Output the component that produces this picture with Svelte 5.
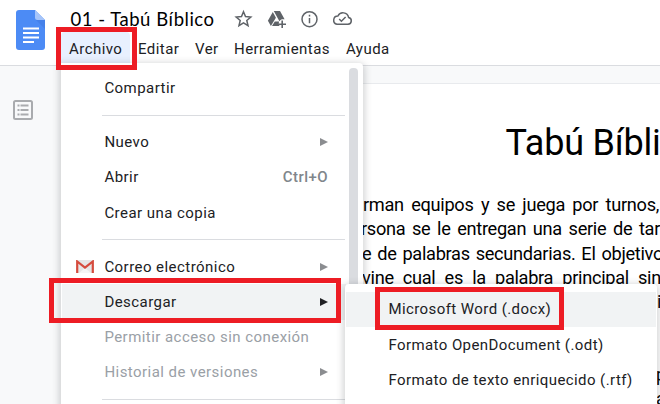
<script>
  const menus = [
    { label: 'Archivo', w: 54 },
    { label: 'Editar', w: 42 },
    { label: 'Ver', w: 24 },
    { label: 'Herramientas', w: 97 },
    { label: 'Ayuda', w: 45 }
  ];
  const items = [
    { label: 'Compartir' },
    { sep: true },
    { label: 'Nuevo', sub: true },
    { label: 'Abrir', key: 'Ctrl+O' },
    { label: 'Crear una copia' },
    { sep: true },
    { label: 'Correo electrónico', sub: true, gmail: true },
    { label: 'Descargar', sub: true, active: true },
    { label: 'Permitir acceso sin conexión', off: true },
    { label: 'Historial de versiones', sub: true, off: true },
    { sep: true }
  ];
  const formats = ['Microsoft Word (.docx)', 'Formato OpenDocument (.odt)', 'Formato de texto enriquecido (.rtf)'];
  const lines = [
    { t: 'rman equipos y se juega por turnos,', x: 363, w: 296 },
    { t: 'rsona se le entregan una serie de tar', x: 361, w: 299 },
    { t: 'e de palabras secundarias. El objetivo', x: 362, w: 301 },
    { t: 'vine cual es la palabra principal sin', x: 362, w: 299 },
    { t: 'i', x: 657, w: 6 },
    { t: '', x: 658, w: 6 },
    { t: '', x: 658, w: 6 },
    { t: 'p', x: 656, w: 12 },
    { t: 'a', x: 656, w: 12 }
  ];
</script>

<div class="app">
  <header>
    <svg class="logo" width="29" height="40" viewBox="0 0 29 40">
      <path d="M3 0H19L29 10V37a3 3 0 0 1-3 3H3a3 3 0 0 1-3-3V3a3 3 0 0 1 3-3z" fill="#4c8bf5" />
      <path d="M19 0L29 10H21.500a2.500 2.500 0 0 1-2.500-2.500z" fill="#a6c5fa" />
      <path d="M20 10H29V19z" fill="#3f7ae0" opacity=".55" />
      <path d="M7 17.500h16v2H7zM7 22h16v2H7zM7 26.500h16v2H7zM7 31h11v2H7z" fill="#fff" />
    </svg>
    <div class="heading">
      <div class="titlebar">
        <span class="title">01 - Tabú Bíblico</span>
        <svg class="tools" width="124" height="20" viewBox="0 0 124 20" fill="none" stroke="#5f6368" stroke-width="1.500">
          <path d="M9.500 2.700l2 4.900 5.300.4-4 3.500 1.200 5.100-4.500-2.700L5 16.600l1.200-5.100-4-3.500 5.300-.4z" />
          <g fill="#5f6368" stroke="none">
            <path d="M39.800 2h6.200l4.600 8.200h-2.700a5 5 0 0 0-2.500 2z" />
            <path d="M38.800 3l3.100 5.700-5 8.400-3-5.400z" />
            <path d="M40.800 12.400h4.200a6 6 0 0 0 .5 4.700H38z" />
            <path d="M47.400 11.500h1.600v3h3v1.600h-3v3h-1.600v-3h-3v-1.600h3z" />
          </g>
          <circle cx="75.500" cy="10.200" r="7.500" />
          <path d="M75.500 9v5.200M75.500 5.800v1.700" />
          <path d="M103 15.300h11a3.500 3.500 0 0 0 .6-6.900a5.700 5.700 0 0 0-10.700-1.400a4.200 4.200 0 0 0-.9 8.300z" />
          <path d="M105.200 10l2.200 2.200 4.200-4.200" />
        </svg>
      </div>
      <nav>
        {#each menus as m}
          <span class="menu" class:open={m.label === 'Archivo'}><span class="fit" style="width:{m.w}px">{m.label}</span></span>
        {/each}
      </nav>
    </div>
  </header>

  <main>
    <aside>
      <svg width="20" height="20" viewBox="0 0 20 20" fill="none" stroke="#a9abae">
        <rect x="1" y="1" width="18" height="18" rx="1.500" stroke-width="2" />
        <path d="M7.500 5.500h8M7.500 10h8M7.500 14.500h8M4.500 5.500h2M4.500 10h2M4.500 14.500h2" stroke-width="1.800" />
      </svg>
    </aside>
    <article>
      <h1>Tabú Bíblico</h1>
      {#each lines as l}
        <p style="margin-left:{l.x - 61}px;width:{l.w}px">{l.t}</p>
      {/each}
    </article>
  </main>

  <div class="dropdown">
    {#each items as it}
      {#if it.sep}
        <div class="sep"></div>
      {:else}
        <div class="row" class:active={it.active} class:off={it.off}>
          {#if it.gmail}
            <svg class="gmail" width="18" height="13" viewBox="0 0 18 13">
              <path d="M1 0h16v13H1z" fill="#e6e6e6" />
              <path d="M3 13l6-5 6 5z" fill="#f5f5f5" />
              <path d="M1.200 13V1.500L9 7.500l7.800-6V13" fill="none" stroke="#d54b3d" stroke-width="2.200" />
            </svg>
          {/if}
          <span>{it.label}</span>
          {#if it.key}<span class="key">{it.key}</span>{/if}
          {#if it.sub}<svg class="arrow" width="8" height="8" viewBox="0 0 8 8"><path d="M0 0L8 4L0 8z" fill="currentColor" /></svg>{/if}
        </div>
      {/if}
    {/each}
    <div class="scroll"></div>
  </div>

  <div class="submenu">
    {#each formats as f, i}
      <div class="row" class:active={i === 0}><span>{f}</span></div>
    {/each}
  </div>

  <div class="mark file"></div>
  <div class="mark download"></div>
  <div class="mark word"></div>
</div>

<style>
  :global(body) { overflow: hidden; }
  .app {
    position: relative; width: 660px; height: 404px; overflow: hidden; background: #f8f9fa;
    display: flex; flex-direction: column; color: #202124;
    font: 15px/20px Roboto, "Noto Sans", sans-serif; letter-spacing: .45px;
  }
  header { box-sizing: border-box; height: 66px; flex: none; background: #fff; border-bottom: 1px solid #dadce0; display: flex; padding: 10px 0 0 16px; }
  .logo { flex: none; }
  .heading { margin-left: 16px; margin-top: -2px; }
  .titlebar { display: flex; height: 23px; padding-left: 9.500px; }
  .title { width: 144px; font: 18.500px/22px Lato, sans-serif; letter-spacing: .5px; color: #000; white-space: nowrap; }
  .tools { margin: 1px 0 0 19.500px; }
  nav { display: flex; margin-top: 1px; }
  .menu { height: 31px; padding: 7px 7px 0 8px; box-sizing: border-box; }
  .menu.open { background: #e8f0fe; border-radius: 4px 4px 0 0; }
  .fit { display: block; white-space: nowrap; }
  main { flex: 1; display: flex; min-height: 0; }
  aside { width: 61px; flex: none; padding: 34px 0 0 13px; box-sizing: border-box; }
  article { width: 700px; flex: none; margin-top: 17px; border-top: 1px solid #e8eaed; background: #fff; color: #000; letter-spacing: 0; }
  h1 { margin: 36px 0 27px 444.500px; font-size: 36px; line-height: 46px; font-weight: 400; letter-spacing: -.2px; }
  p { margin: 0; height: 24.300px; font-size: 18.200px; line-height: 24.300px; letter-spacing: -.3px; text-align-last: justify; }
  .dropdown {
    position: absolute; left: 61px; top: 63px; width: 302px; height: 350px; background: #fff;
    border-radius: 0 4px 4px 4px; box-shadow: 0 2px 7px 2px rgba(60, 64, 67, .22); padding-top: 7.500px; box-sizing: border-box;
  }
  .row { display: flex; align-items: center; height: 35.200px; padding: 0 35px 0 43.400px; white-space: nowrap; }
  .dropdown .row { margin-right: 17px; padding-right: 18px; }
  .row.active { background: #f1f3f4; margin-left: 1px; padding-left: 42.400px; }
  .row.off { color: #9aa0a6; }
  .sep { height: 1px; margin: 9px 18px 9px 41px; background: #dadce0; }
  .gmail { margin: 0 10px 0 -28px; }
  .key, .arrow { margin-left: auto; }
  .key { color: #80868b; font-weight: 500; }
  .arrow { color: #8b8d90; }
  .active .arrow { color: #202124; }
  .scroll { position: absolute; right: 5px; top: 5px; width: 9px; height: 360px; border-radius: 4px; background: #dadce0; }
  .submenu { position: absolute; left: 345px; top: 284px; width: 312px; height: 130px; padding-top: 8px; box-sizing: border-box; background: #fff; border-radius: 4px; box-shadow: 0 2px 7px 2px rgba(60, 64, 67, .22); letter-spacing: .42px; }
  .submenu .row { height: 35.400px; }
  .submenu .row.active { margin-right: 1px; box-sizing: border-box; padding-bottom: 1px; }
  .mark { position: absolute; box-sizing: border-box; border: 5px solid #ed1c24; }
  .file { left: 56px; top: 27px; width: 81px; height: 43px; }
  .download { left: 49px; top: 278px; width: 292px; height: 45px; }
  .word { left: 375px; top: 287px; width: 189px; height: 43px; }
</style>
